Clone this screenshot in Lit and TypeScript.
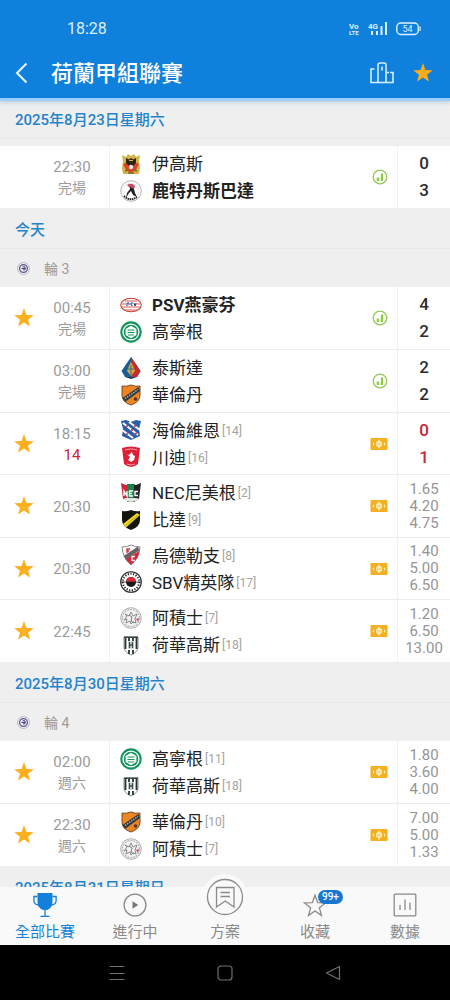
import { LitElement, html, svg, css, nothing } from "lit";
import { customElement, property, state } from "lit/decorators.js";
import { classMap } from "lit/directives/class-map.js";

type Team = { name: string; crest: string; rank?: number; winner?: boolean };
type Match = {
  time: string;
  status?: string;
  live?: boolean;
  starred: boolean;
  home: Team;
  away: Team;
  score?: [number, number];
  odds?: string[];
};
type Day = { date: string; round?: string; matches: Match[] };

const STAR = "M12 1.2l2.7 7.4 7.9.3-6.2 4.9 2.1 7.6-6.5-4.4-6.5 4.4 2.1-7.6L1.4 8.9l7.9-.3z";
const SHIELD = "M2 2q4 1 9-1 5 2 9 1v9q0 7-9 10-9-3-9-10z";

const crests: Record<string, unknown> = {
  eagles: svg`
    <path d="M2 2l4 2 2-3 3 2 3-2 2 3 4-2-1 6 1 7-1 6H3l-1-6 1-7z" fill="#d3b44a"/>
    <path d="M3 11q8-5 16 0l-3 6-5 3-5-3z" fill="#d8452c"/>
    <path d="M6 5l3 1.500 2-1.500 2 1.500L16 5v5l-3 3H9l-3-3z" fill="#2c2218"/>
    <path d="M9 7.500h4" stroke="#d3b44a" stroke-width="1"/>
    <circle cx="11" cy="14" r="2.200" fill="#e9e6e0"/>
    <path d="M5 18l3-1M17 18l-3-1M8 20h6" stroke="#7a6a2a" stroke-width="1.500"/>`,
  sparta: svg`
    <circle cx="11" cy="11" r="10.300" fill="#fff" stroke="#b9a7a0" stroke-width=".9"/>
    <circle cx="11" cy="11" r="8" fill="none" stroke="#ddd" stroke-width=".6"/>
    <path d="M7 5q5-3 8 1l-1 3q-4 0-5-2z" fill="#c74860"/>
    <path d="M10 7l4 2 1 4 2 4-4-2-2-4-2 2-3 5 1-5 3-4z" fill="#222"/>
    <path d="M4 16q6 6 13 1" fill="none" stroke="#222" stroke-width="1.800" stroke-dasharray="1.500 .7"/>`,
  psv: svg`
    <ellipse cx="11" cy="11" rx="10.300" ry="6.700" fill="#fff" stroke="#c9403c" stroke-width="1.100"/>
    <path d="M5 7h12M2 10h18M2 13h18M5 16h12" stroke="#dc5a50" stroke-width="1.200"/>
    <path d="M6 8h10v4H6z" fill="#fff"/>
    <path d="M7 12V9h2v2M13 9h-2v2h1v1M14 9l1 3 1-3" fill="none" stroke="#28408c" stroke-width="1"/>`,
  groningen: svg`
    <circle cx="11" cy="11" r="10.700" fill="#12935c"/>
    <circle cx="11" cy="11" r="8.600" fill="#fff"/>
    <circle cx="11" cy="11" r="7.300" fill="#12935c"/>
    <path d="M11 4.800l5.400 3.100v6.200L11 17.200l-5.400-3.100V7.900z" fill="#fff"/>
    <path d="M7.500 9h7M7.500 11.500h7M8 14h6" stroke="#12935c" stroke-width="1.200"/>`,
  telstar: svg`
    <path d="M11 0l9.500 14-3.500 6H5l-3.500-6z" fill="#1c5d94"/>
    <path d="M11 0l9.500 14-3.500 6h-6z" fill="#c22d33"/>
    <path d="M11 5l2 4 2 5-4 5-4-5 2-5z" fill="#e0a83c"/>
    <path d="M11 8v10M8 12h6" stroke="#2b6f8f" stroke-width="1"/>
    <path d="M5 20h12l-6 2z" fill="#173a63"/>`,
  volendam: svg`
    <path d=${SHIELD} fill="#ec8526" stroke="#7a4a1c" stroke-width="1"/>
    <path d="M2.500 14L18.500 3l1.500 4L5 18z" fill="#323a3d"/>
    <path d="M5 14.500L18 5.500" stroke="#a9b3b6" stroke-width="1.400" stroke-dasharray="1.500 1"/>
    <circle cx="15.500" cy="15" r="1.800" fill="#57361c"/>`,
  heerenveen: svg`
    <path d="M1 2l5-1 5 2 5-2 5 1-2 8 1 7-9 4-9-4 1-7z" fill="#2b5fa8"/>
    <path d="M3 4l15 12M2 11l11 8M9 3l11 8" stroke="#fff" stroke-width="1.900"/>
    <g fill="#d52e45"><circle cx="7" cy="7" r="1.100"/><circle cx="12" cy="11" r="1.100"/><circle cx="16" cy="14.500" r="1.100"/><circle cx="15" cy="7" r="1"/><circle cx="7" cy="15" r="1"/></g>`,
  twente: svg`
    <path d="M2 2q9-3 18 0l-2 16q-7 6-14 0z" fill="#de1f36"/>
    <path d="M5 4q6-2 12 0" fill="none" stroke="#f6a9b0" stroke-width="1.200"/>
    <path d="M7 8l2 1 3-3 1 3 2 1-1 4-3 2-3-2 2-3z" fill="#fff"/>
    <path d="M7 18q4 2 8 0" fill="none" stroke="#f6a9b0" stroke-width="1"/>`,
  nec: svg`
    <path d="M1 1l5 2h5v17l-8-3z" fill="#c8283a"/>
    <path d="M7 2h8v18H7z" fill="#16834c"/>
    <path d="M14 3h2l5-2-2 16-5 3z" fill="#232323"/>
    <path d="M2 17q9 6 18 0l-4-1H6z" fill="#e5e5e5"/>
    <path d="M4 14V9l3 5V9M13 9H9.500v5H13M9.500 11.500H12M18 9.500h-3v4h3" fill="none" stroke="#fff" stroke-width="1.400"/>`,
  nac: svg`
    <path d=${SHIELD} fill="#15150f"/>
    <path d="M3 15L17 4l3 2L6 18.500z" fill="#f0d91f"/>
    <path d="M6 16L18 6" stroke="#7e7415" stroke-width=".8" stroke-dasharray="1.500 1"/>`,
  utrecht: svg`
    <path d="M2 3q5 0 9-2 4 2 9 2-1 12-9 18Q3 15 2 3z" fill="#fff" stroke="#777" stroke-width=".9"/>
    <path d="M19.500 7q-1 8-8.500 13.500Q8 18 5.500 15z" fill="#d8253a"/>
    <path d="M3.500 12L18 2.500l1.500 4L6 15.500z" fill="#6b6466"/>
    <path d="M7 9V5h3M7 7h2" fill="none" stroke="#d8253a" stroke-width="1.300"/>
    <path d="M15 12.500h-3v4h3" fill="none" stroke="#fff" stroke-width="1.300"/>`,
  excelsior: svg`
    <circle cx="11" cy="11" r="10.300" fill="#fff" stroke="#222" stroke-width="1.100"/>
    <circle cx="11" cy="11" r="8.200" fill="none" stroke="#222" stroke-width="2" stroke-dasharray="1.200 1.500"/>
    <circle cx="11" cy="11" r="6.200" fill="#fff"/>
    <circle cx="11" cy="11" r="5" fill="#181818"/>
    <path d="M6 11a5 5 0 0 1 10 0z" fill="#e02a38"/>
    <path d="M1 11h20" stroke="#222" stroke-width=".8"/>`,
  ajax: svg`
    <circle cx="11" cy="11" r="10.300" fill="#f3f3f3" stroke="#a5a5a5" stroke-width=".9"/>
    <circle cx="11" cy="11" r="8.500" fill="none" stroke="#b5b5b5" stroke-width="1.200" stroke-dasharray="2 1"/>
    <path d="M5 7l4 2 2-4 2 4 4-2-2 5 1 4-3-1-2 2-1-3-4 2 1-4-3 1 3-4z" fill="none" stroke="#888" stroke-width="1"/>
    <path d="M9 8l3 2-1 4 3 2" fill="none" stroke="#777" stroke-width="1"/>
    <path d="M16 12l3-1-1 4z" fill="#cf4459"/>`,
  heracles: svg`
    <path d="M4 3h14v10q0 5-7 8-7-3-7-8z" fill="#fff" stroke="#777f7f" stroke-width=".9"/>
    <path d="M5.500 4v11M9 4v3M13 4v3M16.500 4v11M9 16v4M13 16v4" stroke="#263233" stroke-width="1.800"/>
    <path d="M4 2.500h14v1.500H4z" fill="#384546"/>
    <path d="M8 7h6v8H8z" fill="#d4dada"/>
    <path d="M9.500 8v6M12.500 8v6M9.500 11h3" stroke="#39494a" stroke-width="1.300"/>`,
};

const T = (name: string, crest: string, rank?: number, winner = false): Team => ({ name, crest, rank, winner });

const DAYS: Day[] = [
  {
    date: "2025年8月23日星期六",
    matches: [
      { time: "22:30", status: "完場", starred: false, home: T("伊高斯", "eagles"), away: T("鹿特丹斯巴達", "sparta", undefined, true), score: [0, 3] },
    ],
  },
  {
    date: "今天",
    round: "輪 3",
    matches: [
      { time: "00:45", status: "完場", starred: true, home: T("PSV燕豪芬", "psv", undefined, true), away: T("高寧根", "groningen"), score: [4, 2] },
      { time: "03:00", status: "完場", starred: false, home: T("泰斯達", "telstar"), away: T("華倫丹", "volendam"), score: [2, 2] },
      { time: "18:15", status: "14", live: true, starred: true, home: T("海倫維恩", "heerenveen", 14), away: T("川迪", "twente", 16), score: [0, 1] },
      { time: "20:30", starred: true, home: T("NEC尼美根", "nec", 2), away: T("比達", "nac", 9), odds: ["1.65", "4.20", "4.75"] },
      { time: "20:30", starred: true, home: T("烏德勒支", "utrecht", 8), away: T("SBV精英隊", "excelsior", 17), odds: ["1.40", "5.00", "6.50"] },
      { time: "22:45", starred: true, home: T("阿積士", "ajax", 7), away: T("荷華高斯", "heracles", 18), odds: ["1.20", "6.50", "13.00"] },
    ],
  },
  {
    date: "2025年8月30日星期六",
    round: "輪 4",
    matches: [
      { time: "02:00", status: "週六", starred: true, home: T("高寧根", "groningen", 11), away: T("荷華高斯", "heracles", 18), odds: ["1.80", "3.60", "4.00"] },
      { time: "22:30", status: "週六", starred: true, home: T("華倫丹", "volendam", 10), away: T("阿積士", "ajax", 7), odds: ["7.00", "5.00", "1.33"] },
    ],
  },
  { date: "2025年8月31日星期日", matches: [] },
];

const reset = css`
  :host {
    display: block;
    box-sizing: border-box;
  }
  * {
    box-sizing: border-box;
  }
  button {
    display: grid;
    place-items: center;
    margin: 0;
    padding: 0;
    border: 0;
    background: none;
    color: inherit;
    font: inherit;
    cursor: pointer;
  }
  svg {
    display: block;
  }
`;

@customElement("match-row")
class MatchRow extends LitElement {
  @property({ attribute: false }) match!: Match;

  static styles = [
    reset,
    css`
      :host {
        height: 100%;
      }
      .row {
        display: grid;
        grid-template-columns: 48px 62px minmax(0, 1fr) 27px 53px;
        height: 100%;
        background: #fff;
      }
      .star {
        color: #fdb01e;
      }
      .when {
        display: flex;
        flex-direction: column;
        justify-content: center;
        padding: 2px 13px 0 0;
        border-right: 1px solid #f1f1f1;
        color: #9b9b9b;
        font-size: 15px;
        line-height: 21px;
        text-align: center;
      }
      .status {
        font-size: 14px;
      }
      .status.live {
        color: #cc2438;
        font-size: 15px;
      }
      .teams {
        display: flex;
        flex-direction: column;
        justify-content: center;
        padding-left: 10px;
      }
      .team {
        display: flex;
        align-items: center;
        height: 27px;
        color: #222;
        font-size: 17px;
        line-height: 25px;
        white-space: nowrap;
      }
      .name {
        margin-left: 10px;
        padding-top: 2px;
      }
      .winner {
        font-weight: 700;
      }
      .rank {
        margin-left: 2px;
        padding-top: 2px;
        color: #a3a3a3;
        font-size: 12px;
      }
      .kind {
        display: flex;
        align-items: center;
      }
      .figures {
        display: flex;
        flex-direction: column;
        justify-content: center;
        border-left: 1px solid #f1f1f1;
        text-align: center;
      }
      .score {
        color: #2b2b2e;
        font-size: 17px;
        font-weight: 500;
        line-height: 27px;
      }
      .score.live {
        color: #cc2438;
      }
      .odd {
        color: #959595;
        font-size: 15px;
        line-height: 17px;
      }
    `,
  ];

  private team(t: Team) {
    return html`<div class="team">
      <svg width="22" height="22" viewBox="0 0 22 22" aria-hidden="true">${crests[t.crest]}</svg>
      <span class=${classMap({ name: true, winner: !!t.winner })}>${t.name}</span>
      ${t.rank ? html`<span class="rank">[${t.rank}]</span>` : nothing}
    </div>`;
  }

  render() {
    const m = this.match;
    const live = !!m.live;
    return html`<article class="row">
      ${m.starred
        ? html`<button class="star" aria-label="取消收藏">
            <svg width="22" height="22" viewBox="0 0 24 24"><path d=${STAR} fill="currentColor" /></svg>
          </button>`
        : html`<span></span>`}
      <div class="when">
        <span>${m.time}</span>
        ${m.status ? html`<span class=${classMap({ status: true, live })}>${m.status}</span>` : nothing}
      </div>
      <div class="teams">${this.team(m.home)}${this.team(m.away)}</div>
      <div class="kind">
        ${m.score && !live
          ? html`<svg width="20" height="16" viewBox="0 0 20 16" fill="none" aria-hidden="true">
              <circle cx="10" cy="8" r="6.800" stroke="#96c95c" stroke-width="1.300" />
              <path d="M7.800 12V8.500M12 12V4.500" stroke="#8ccb3f" stroke-width="2.200" />
              <path d="M10 12V9.500" stroke="#b9e08a" stroke-width="1" />
            </svg>`
          : html`<svg width="18" height="12" viewBox="0 0 18 12" fill="none" aria-hidden="true">
              <rect x=".5" width="17" height="12" rx="1" fill="#f4b020" />
              <circle cx="9" cy="6" r="2.300" stroke="#fff1c9" stroke-width="1.400" />
              <path d="M9 1.500v9M3.500 4.800v2.400M14.500 4.800v2.400" stroke="#fff1c9" stroke-width="1.200" />
            </svg>`}
      </div>
      <div class="figures">
        ${m.score?.map((s) => html`<span class=${classMap({ score: true, live })}>${s}</span>`)}
        ${m.odds?.map((o) => html`<span class="odd">${o}</span>`)}
      </div>
    </article>`;
  }
}

@customElement("match-day")
class MatchDay extends LitElement {
  @property({ attribute: false }) day!: Day;

  static styles = [
    reset,
    css`
      .date {
        margin: 0;
        height: 41px;
        padding: 0 15px;
        border-bottom: 1px solid #e9e9e9;
        color: #2583cb;
        font-size: 15px;
        font-weight: 500;
        line-height: 44px;
      }
      .round {
        display: flex;
        align-items: center;
        gap: 13px;
        height: 38px;
        padding: 0 16px;
        color: #9c9c9c;
        font-size: 14px;
      }
      .matches {
        margin: 0;
        padding: 0;
        list-style: none;
      }
      .spaced {
        margin-top: 7px;
      }
      .item {
        height: 62px;
      }
      .item:nth-child(even) {
        height: 63px;
      }
      .item + .item {
        border-top: 1px solid #ececec;
      }
    `,
  ];

  render() {
    const { date, round, matches } = this.day;
    return html`<section>
      <h2 class="date">${date}</h2>
      ${round
        ? html`<div class="round">
            <svg width="15" height="15" viewBox="0 0 15 15" fill="none" aria-hidden="true">
              <circle cx="7.500" cy="7.500" r="6" stroke="#b9b5cf" stroke-width="1" />
              <circle cx="7.500" cy="7.500" r="3.900" stroke="#5d5690" stroke-width="1.300" />
              <path d="M5.500 7.500h4M6.500 5.800h2.500v3H7" stroke="#4a4385" stroke-width="1" />
            </svg>
            <span>${round}</span>
          </div>`
        : nothing}
      <ul class=${classMap({ matches: true, spaced: !round })}>
        ${matches.map((m) => html`<li class="item"><match-row .match=${m}></match-row></li>`)}
      </ul>
    </section>`;
  }
}

@customElement("tab-bar")
class TabBar extends LitElement {
  @state() private active = "all";

  static styles = [
    reset,
    css`
      .bar {
        display: grid;
        grid-template-columns: repeat(5, minmax(0, 1fr));
        align-items: end;
        background: #f9f9f9;
        color: #8a8a8a;
      }
      .tab {
        display: flex;
        flex-direction: column;
        align-items: center;
        gap: 2px;
        width: 100%;
        height: 58px;
        padding-top: 6px;
        font-size: 15px;
        line-height: 26px;
      }
      .active {
        color: #1381dc;
      }
      .icon {
        position: relative;
      }
      .raised {
        margin: -19px 0 -3px;
        border-radius: 50%;
        background: #f9f9f9;
      }
      .count {
        position: absolute;
        top: -3px;
        left: 15px;
        padding: 0 4px;
        border-radius: 7px;
        background: #1777d1;
        color: #fff;
        font-size: 10px;
        font-weight: 500;
        line-height: 14px;
      }
    `,
  ];

  private tab(id: string, label: string, icon: unknown, raised = false, count = "") {
    return html`<button
      class=${classMap({ tab: true, active: this.active === id })}
      aria-current=${this.active === id ? "page" : "false"}
      @click=${() => (this.active = id)}
    >
      <span class=${classMap({ icon: true, raised })}>${icon}${count ? html`<span class="count">${count}</span>` : nothing}</span>
      <span>${label}</span>
    </button>`;
  }

  render() {
    return html`<nav class="bar">
      ${this.tab("all", "全部比賽", html`<svg width="24" height="24" viewBox="0 0 24 24" fill="none">
        <path d="M4.500 0h15v9q0 6-5.500 8h-4q-5.500-2-5.500-8z" fill="currentColor" />
        <path d="M4.500 3.500H.9v4.200q0 3.500 4.500 4.300M19.500 3.500h3.600v4.200q0 3.500-4.500 4.300M12 16v7M7.500 23.300h9" stroke="currentColor" stroke-width="1.300" />
      </svg>`)}
      ${this.tab("live", "進行中", html`<svg width="24" height="24" viewBox="0 0 24 24" fill="none">
        <circle cx="12" cy="12" r="10.900" stroke="currentColor" stroke-width="1.300" />
        <path d="M9.500 8.300l5.700 3.700-5.700 3.700z" fill="#777" />
      </svg>`)}
      ${this.tab("plan", "方案", html`<svg width="46" height="46" viewBox="0 0 46 46" fill="none">
        <circle cx="23" cy="23" r="17.500" stroke="currentColor" stroke-width="1.300" />
        <path d="M14.500 13.500h17.500v19.500l-8.700-6-8.800 6zM18.500 18.500h9.500M18.500 22.500h9.500" stroke="currentColor" stroke-width="1.300" />
      </svg>`, true)}
      ${this.tab("fav", "收藏", html`<svg width="24" height="24" viewBox="0 0 24 24" fill="none">
        <path d=${STAR} transform="translate(0 1)" stroke="currentColor" stroke-width="1.300" />
      </svg>`, false, "99+")}
      ${this.tab("data", "數據", html`<svg width="24" height="24" viewBox="0 0 24 24" fill="none">
        <rect x="1.200" y="1.200" width="21.600" height="21.600" rx=".8" stroke="currentColor" stroke-width="1.300" />
        <path d="M7 17v-5M12 17V6.500M17 17V9.500" stroke="currentColor" stroke-width="1.300" />
      </svg>`)}
    </nav>`;
  }
}

@customElement("app-root")
class AppRoot extends LitElement {
  static styles = [
    reset,
    css`
      :host {
        display: flex;
        flex-direction: column;
        height: 100vh;
        background: #efefef;
        font-family: Roboto, "Noto Sans CJK TC", sans-serif;
      }
      .header {
        z-index: 1;
        background: #1080dd;
        color: #fff;
        box-shadow: 0 3px 0 #9bcdf7, 0 3px 5px 1px rgba(40, 130, 210, 0.35);
      }
      .status {
        display: flex;
        align-items: center;
        gap: 8px;
        padding: 18px 28px 8px 67px;
        color: #dff1ff;
        font-size: 16px;
        line-height: 22px;
      }
      .clock {
        flex: 1;
      }
      .tiny {
        fill: currentColor;
        font-size: 8px;
        font-weight: 700;
      }
      .small {
        font-size: 6px;
      }
      .level {
        fill: currentColor;
        font-size: 9px;
      }
      .bar {
        display: flex;
        align-items: center;
        height: 50px;
        padding: 0 16px 0 10px;
      }
      .title {
        flex: 1;
        margin: 0;
        padding: 2px 0 0 17px;
        font-size: 22px;
        font-weight: 500;
        line-height: 28px;
      }
      .actions {
        display: flex;
        gap: 18px;
      }
      .gold {
        color: #feab18;
      }
      .list {
        flex: 1;
        min-height: 0;
        overflow: hidden;
      }
      .tabs {
        z-index: 1;
      }
      .system {
        display: grid;
        grid-template-columns: repeat(3, 1fr);
        align-items: center;
        height: 55px;
        padding: 0 14%;
        background: #000;
        color: #707070;
      }
    `,
  ];

  render() {
    return html`
      <header class="header">
        <div class="status">
          <span class="clock">18:28</span>
          <svg width="11" height="16" viewBox="0 0 11 16" class="tiny">
            <text x="0" y="8">Vo</text>
            <text class="small" x="0" y="14">LTE</text>
          </svg>
          <svg width="20" height="16" viewBox="0 0 20 16" class="tiny">
            <text x="0" y="8">4G</text>
            <path d="M3 10h2v4H3zM8 10h2v4H8zM12.500 5h2v9h-2zM17 1h2v13h-2z" />
          </svg>
          <svg width="26" height="16" viewBox="0 0 26 16">
            <rect x=".8" y="2" width="21.500" height="11.500" rx="4" fill="none" stroke="currentColor" stroke-width="1.400" />
            <path d="M23.500 5.500h1.200v4.500h-1.200z" fill="currentColor" />
            <text class="level" x="11.500" y="11" text-anchor="middle">54</text>
          </svg>
        </div>
        <div class="bar">
          <button aria-label="返回">
            <svg width="24" height="24" viewBox="0 0 24 24" fill="none">
              <path d="M16.500 2.500L7 12l9.500 9.500" stroke="#e9f6ff" stroke-width="2" />
            </svg>
          </button>
          <h1 class="title">荷蘭甲組聯賽</h1>
          <div class="actions">
            <button aria-label="排名">
              <svg width="24" height="24" viewBox="0 0 24 24" fill="none" stroke="#d5eeff" stroke-width="1.600">
                <path d="M8 21.500H1V8h3.500M8 21.500V4q0-2 2-2h4q2 0 2 2v17.500zM16 11.500h3M20 11.500h3v10h-7M12 5.500v4" />
              </svg>
            </button>
            <button class="gold" aria-label="收藏聯賽">
              <svg width="22" height="22" viewBox="0 0 24 24"><path d=${STAR} fill="currentColor" /></svg>
            </button>
          </div>
        </div>
      </header>
      <main class="list">${DAYS.map((d) => html`<match-day .day=${d}></match-day>`)}</main>
      <tab-bar class="tabs"></tab-bar>
      <footer class="system">
        <button aria-label="選單">
          <svg width="16" height="16" viewBox="0 0 16 16" fill="none"><path d="M.5 1.500h15M.5 8.500h15M.5 14.500h15" stroke="currentColor" /></svg>
        </button>
        <button aria-label="主頁">
          <svg width="16" height="16" viewBox="0 0 16 16" fill="none"><rect x="1" y="1" width="14" height="14" rx="3" stroke="currentColor" stroke-width="1.200" /></svg>
        </button>
        <button aria-label="返回">
          <svg width="16" height="16" viewBox="0 0 16 16" fill="none"><path d="M14.500 1.500v13L1.500 8z" stroke="currentColor" stroke-width="1.200" stroke-linejoin="round" /></svg>
        </button>
      </footer>
    `;
  }
}
